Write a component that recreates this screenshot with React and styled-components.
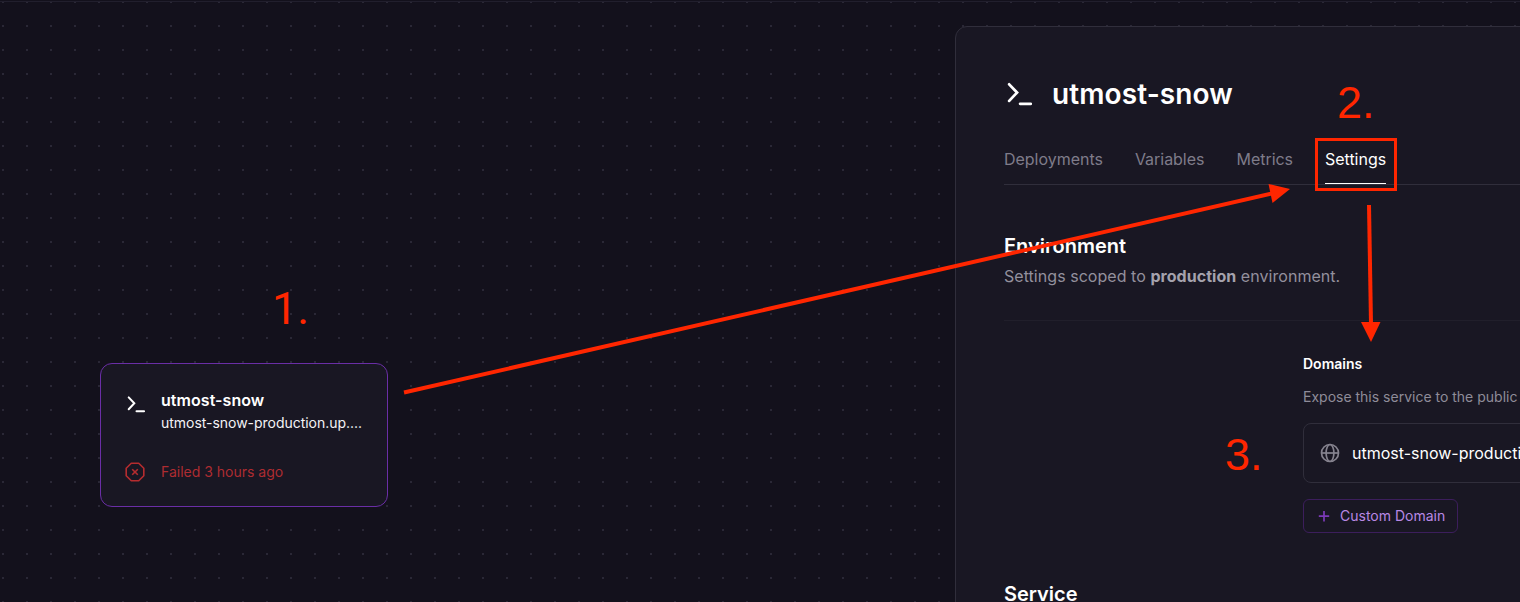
import React from "react";
import styled, { createGlobalStyle } from "styled-components";

const Global = createGlobalStyle`
  *, *::before, *::after { box-sizing: border-box; }
  body { margin: 0; overflow: hidden; background: #13111c; }
  h1, h2, h3, p { margin: 0; }
`;

const Workspace = styled.div`
  position: relative;
  display: flex;
  width: 1520px;
  height: 602px;
  overflow: hidden;
  color: #fff;
  font-family: Inter, "Liberation Sans", sans-serif;
  background-color: #13111c;
  background-image: conic-gradient(from 270deg at 2px 2px, #2a2836 90deg, transparent 0);
  background-size: 24px 24px;
  background-position: 2px 1px;
  &::before {
    content: "";
    position: absolute;
    inset: 0 0 auto;
    height: 2px;
    background: #13111c;
    border-bottom: 1px solid #211f2d;
  }
`;

const Canvas = styled.main`
  position: relative;
  flex: 0 0 955px;
`;

const ServiceNode = styled.article`
  position: absolute;
  left: 100px;
  top: 363px;
  width: 288px;
  height: 144px;
  padding: 25px 24px 24px;
  display: flex;
  flex-direction: column;
  justify-content: space-between;
  background: #191723;
  border: 1px solid #6a2ea6;
  border-radius: 12px;
`;

const NodeRow = styled.div`
  display: grid;
  grid-template-columns: 20px 1fr;
  column-gap: 16px;
  align-items: ${(p) => (p.$top ? "start" : "center")};
  & > svg { margin-top: ${(p) => (p.$top ? 5.5 : 0)}px; }
`;

const NodeName = styled.h3`
  font-size: 16px;
  line-height: 22px;
  font-weight: 600;
  letter-spacing: 0.05px;
`;

const NodeUrl = styled.p`
  margin-top: 1px;
  font-size: 14px;
  line-height: 22px;
  letter-spacing: -0.03px;
  color: #f4f3f6;
  white-space: nowrap;
`;

const NodeStatus = styled.p`
  font-size: 14px;
  line-height: 20px;
  color: #ae2c31;
`;

const Panel = styled.aside`
  flex: 0 0 620px;
  margin-top: 26px;
  padding: 45px 0 0 48px;
  height: 620px;
  background: #191723;
  border: 1px solid #302e3b;
  border-radius: 12px 0 0 0;
`;

const PanelHeader = styled.header`
  display: flex;
  align-items: center;
  gap: 20px;
  height: 44px;
`;

const PanelTitle = styled.h1`
  font-size: 28px;
  line-height: 44px;
  font-weight: 600;
  letter-spacing: 0.1px;
`;

const Tabs = styled.nav`
  display: flex;
  gap: 32px;
  height: 43px;
  margin-top: 26px;
  border-bottom: 1px solid #302e3b;
`;

const Tab = styled.span`
  height: 42px;
  padding-top: 5px;
  font-size: 16px;
  line-height: 24px;
  letter-spacing: -0.025px;
  color: ${(p) => (p.$active ? "#fff" : "#7f7c8a")};
  border-bottom: 1px solid ${(p) => (p.$active ? "#fff" : "transparent")};
`;

const Section = styled.section`
  padding-top: 47px;
`;

const SectionTitle = styled.h2`
  font-size: 20px;
  line-height: 28px;
  font-weight: 600;
`;

const SectionText = styled.p`
  margin-top: 4px;
  font-size: 16px;
  line-height: 24px;
  letter-spacing: 0.045px;
  color: #93909d;
  strong { font-weight: 700; color: #a5a2ad; }
`;

const Divider = styled.hr`
  height: 1px;
  margin: 32px 0 0;
  border: 0;
  background: #211f2b;
`;

const Domains = styled.div`
  display: flex;
  flex-direction: column;
  align-items: flex-start;
  margin-left: 299px;
  padding-top: 33px;
`;

const DomainsTitle = styled.h3`
  font-size: 14px;
  line-height: 20px;
  font-weight: 600;
`;

const DomainsText = styled.p`
  margin-top: 13px;
  font-size: 14px;
  line-height: 20px;
  color: #8f8c99;
  white-space: nowrap;
`;

const DomainCard = styled.div`
  display: flex;
  align-items: center;
  gap: 12px;
  width: 310px;
  height: 60px;
  margin-top: 16px;
  padding-left: 16px;
  font-size: 16px;
  white-space: nowrap;
  border: 1px solid #302e3b;
  border-radius: 8px;
`;

const OutlineButton = styled.button`
  display: flex;
  align-items: center;
  gap: 8px;
  width: 155px;
  height: 34px;
  margin-top: 16px;
  padding: 0 0 0 12px;
  font: 400 14px/20px Inter, sans-serif;
  white-space: nowrap;
  color: #b888e4;
  background: transparent;
  border: 1px solid #3c1e5c;
  border-radius: 6px;
`;

const ServiceTitle = styled(SectionTitle)`
  margin-top: 47px;
`;

const Overlay = styled.div`
  position: absolute;
  inset: 0;
  pointer-events: none;
  color: #ff2600;
`;

const Arrows = styled.svg`
  position: absolute;
  inset: 0;
`;

const Step = styled.span`
  position: absolute;
  left: ${(p) => p.$x}px;
  top: ${(p) => p.$y}px;
  font: 400 45px/50px ${(p) => p.$face || '"Liberation Sans"'}, Arial, sans-serif;
`;

const Highlight = styled.span`
  position: absolute;
  left: 1315px;
  top: 138px;
  width: 82px;
  height: 53px;
  border: 3px solid #ff2600;
`;

const Prompt = ({ size }) => (
  <svg width={size} height={size * 0.9} viewBox="0 0 20 18" fill="none" stroke="#fff" strokeWidth="2" strokeLinecap="round">
    <path d="M3.7 2.4 9.3 8.3 3.7 14.2" />
    <path d="M11.5 16.3h7.6" />
  </svg>
);

const FailedIcon = () => (
  <svg width="20" height="20" viewBox="0 0 20 20" fill="none" stroke="#b52c2f" strokeWidth="1.6">
    <path d="M6.3 1.2h7.4l5.1 5.1v7.4l-5.1 5.1H6.3l-5.1-5.1V6.3z" strokeLinejoin="round" />
    <path d="m7.2 7.2 5.6 5.6m0-5.6-5.6 5.6" />
  </svg>
);

const Globe = () => (
  <svg width="20" height="20" viewBox="0 0 20 20" fill="none" stroke="#86838f" strokeWidth="1.7">
    <circle cx="10" cy="10" r="8.5" />
    <ellipse cx="10" cy="10" rx="3.9" ry="8.5" />
    <path d="M1.4 10h17.2" />
  </svg>
);

const Plus = () => (
  <svg width="16" height="16" viewBox="0 0 16 16" fill="none" stroke="#7c3ab8" strokeWidth="1.7">
    <path d="M8 3v10.4M2.8 8.2h10.4" />
  </svg>
);

const tabs = ["Deployments", "Variables", "Metrics", "Settings"];

export default function App() {
  return (
    <Workspace>
      <Global />
      <Canvas>
        <ServiceNode>
          <NodeRow $top>
            <Prompt size={20} />
            <div>
              <NodeName>utmost-snow</NodeName>
              <NodeUrl>utmost-snow-production.up....</NodeUrl>
            </div>
          </NodeRow>
          <NodeRow>
            <FailedIcon />
            <NodeStatus>Failed 3 hours ago</NodeStatus>
          </NodeRow>
        </ServiceNode>
      </Canvas>
      <Panel>
        <PanelHeader>
          <Prompt size={28} />
          <PanelTitle>utmost-snow</PanelTitle>
        </PanelHeader>
        <Tabs>
          {tabs.map((name) => (
            <Tab key={name} $active={name === "Settings"}>{name}</Tab>
          ))}
        </Tabs>
        <Section>
          <SectionTitle>Environment</SectionTitle>
          <SectionText>
            Settings scoped to <strong>production</strong> environment.
          </SectionText>
        </Section>
        <Divider />
        <Domains>
          <DomainsTitle>Domains</DomainsTitle>
          <DomainsText>Expose this service to the public</DomainsText>
          <DomainCard>
            <Globe />
            utmost-snow-production
          </DomainCard>
          <OutlineButton>
            <Plus />
            Custom Domain
          </OutlineButton>
        </Domains>
        <ServiceTitle>Service</ServiceTitle>
      </Panel>
      <Overlay>
        <Arrows width="1520" height="602" fill="#ff2600" stroke="none">
          <path d="M404 392.5 1272 193.5" stroke="#ff2600" strokeWidth="4" />
          <path d="M1268.5 184 1290 189 1272.5 203z" />
          <path d="M1369 205 1371 324" stroke="#ff2600" strokeWidth="4" />
          <path d="M1361 322h19.5L1371 342z" />
        </Arrows>
        <Step $x={272} $y={284} $face="Roboto">1.</Step>
        <Step $x={1337} $y={78}>2.</Step>
        <Step $x={1225} $y={430}>3.</Step>
        <Highlight />
      </Overlay>
    </Workspace>
  );
}
